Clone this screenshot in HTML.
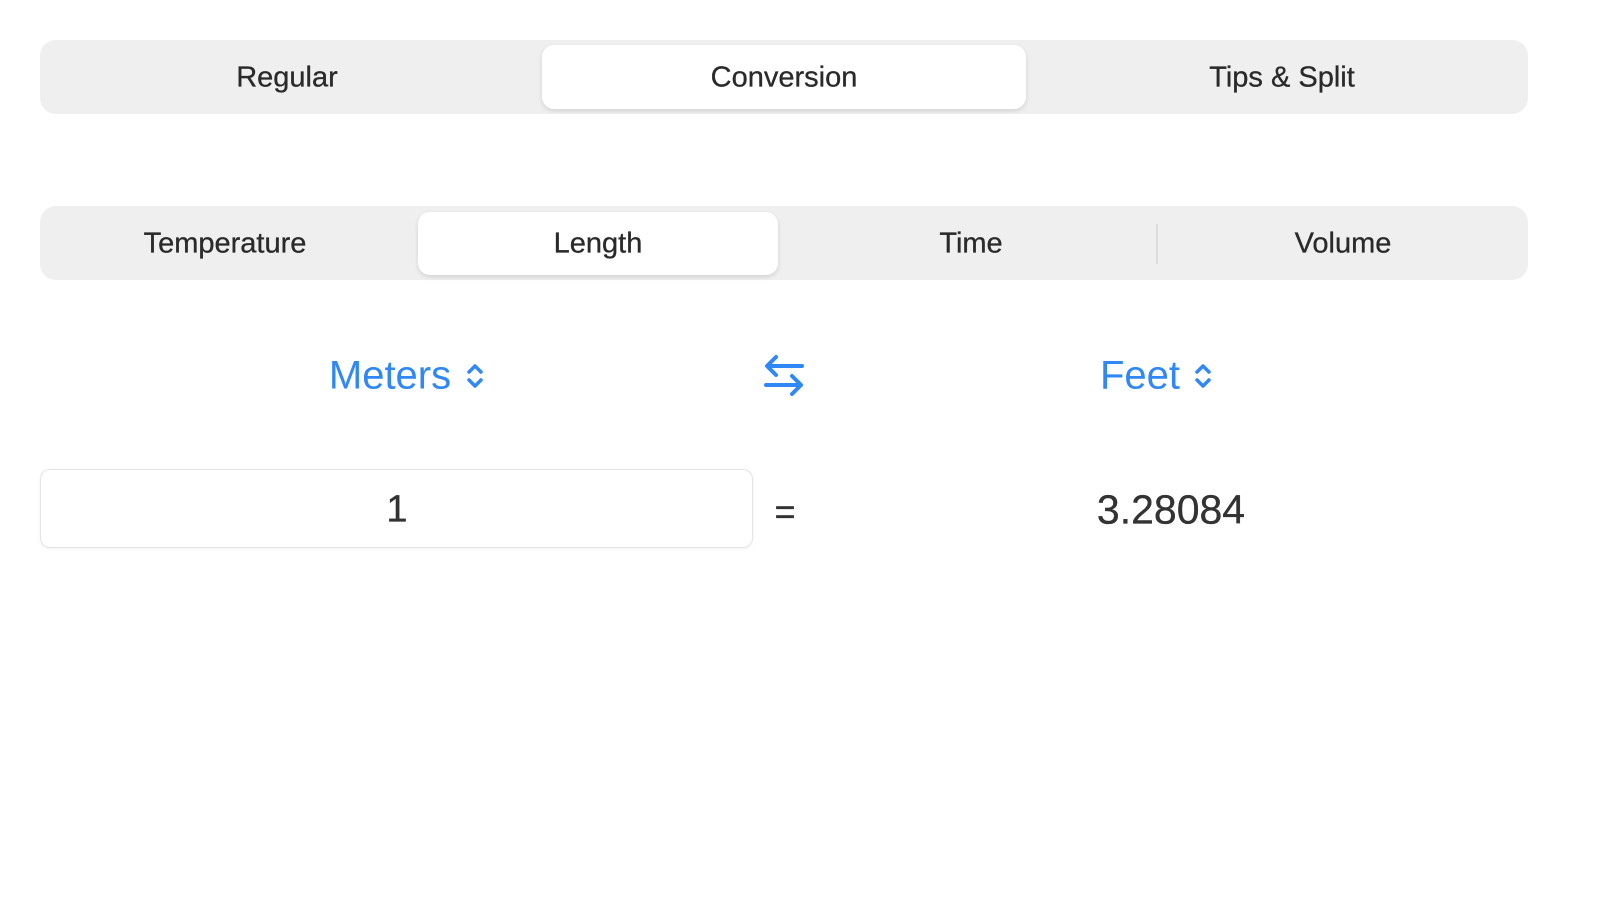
<!DOCTYPE html>
<html><head><style>
body{margin:0;width:1599px;height:900px;background:#fff;font-family:"Liberation Sans",sans-serif;position:relative;overflow:hidden}
.bar{position:absolute;left:40px;width:1488px;height:74px;background:#efefef;border-radius:16px}
.sel{position:absolute;background:#fff;border-radius:12px;box-shadow:0 2px 5px rgba(0,0,0,.12)}
.t{position:absolute;font-size:29px;color:#2a2a2a;transform:translate(-50%,-50%);white-space:nowrap;-webkit-text-stroke:0.3px #2a2a2a}
.b{position:absolute;color:#2f88f5;font-size:40px;transform:translate(-50%,-50%);white-space:nowrap}
</style></head><body>
<div class="bar" style="top:40px"></div>
<div class="sel" style="left:542px;top:45px;width:484px;height:64px"></div>
<div class="t" style="left:287px;top:78px">Regular</div>
<div class="t" style="left:784px;top:78px">Conversion</div>
<div class="t" style="left:1282px;top:78px">Tips &amp; Split</div>

<div class="bar" style="top:206px"></div>
<div class="sel" style="left:418px;top:212px;width:360px;height:63px"></div>
<div style="position:absolute;left:1156px;top:224px;width:2px;height:40px;background:#dcdcdc"></div>
<div class="t" style="left:225px;top:244px">Temperature</div>
<div class="t" style="left:598px;top:244px">Length</div>
<div class="t" style="left:971px;top:244px">Time</div>
<div class="t" style="left:1343px;top:244px">Volume</div>

<div class="b" style="left:390px;top:376px">Meters</div>
<svg style="position:absolute;left:464px;top:360px" width="22" height="32" viewBox="0 0 22 32" fill="none" stroke="#2f88f5" stroke-width="3.5" stroke-linecap="round" stroke-linejoin="round"><path d="M5 12l6-6 6 6M5 20l6 6 6-6"/></svg>
<svg style="position:absolute;left:762px;top:352px" width="44" height="48" viewBox="0 0 44 48" fill="none" stroke="#2f88f5" stroke-width="4" stroke-linecap="round" stroke-linejoin="round"><path d="M40 14H6M14 5l-9 9 9 9M4 33h34M30 24l9 9-9 9"/></svg>
<div class="b" style="left:1140px;top:376px">Feet</div>
<svg style="position:absolute;left:1192px;top:360px" width="22" height="32" viewBox="0 0 22 32" fill="none" stroke="#2f88f5" stroke-width="3.5" stroke-linecap="round" stroke-linejoin="round"><path d="M5 12l6-6 6 6M5 20l6 6 6-6"/></svg>

<div style="position:absolute;left:40px;top:469px;width:711px;height:77px;border:1px solid #e4e4e4;border-radius:10px;box-shadow:0 1px 3px rgba(0,0,0,.06)"></div>
<div class="t" style="left:397px;top:510px;font-size:38px;color:#333">1</div>
<div class="t" style="left:785px;top:512px;font-size:36px;color:#333">=</div>
<div class="t" style="left:1171px;top:510px;font-size:41px;color:#333">3.28084</div>
</body></html>
